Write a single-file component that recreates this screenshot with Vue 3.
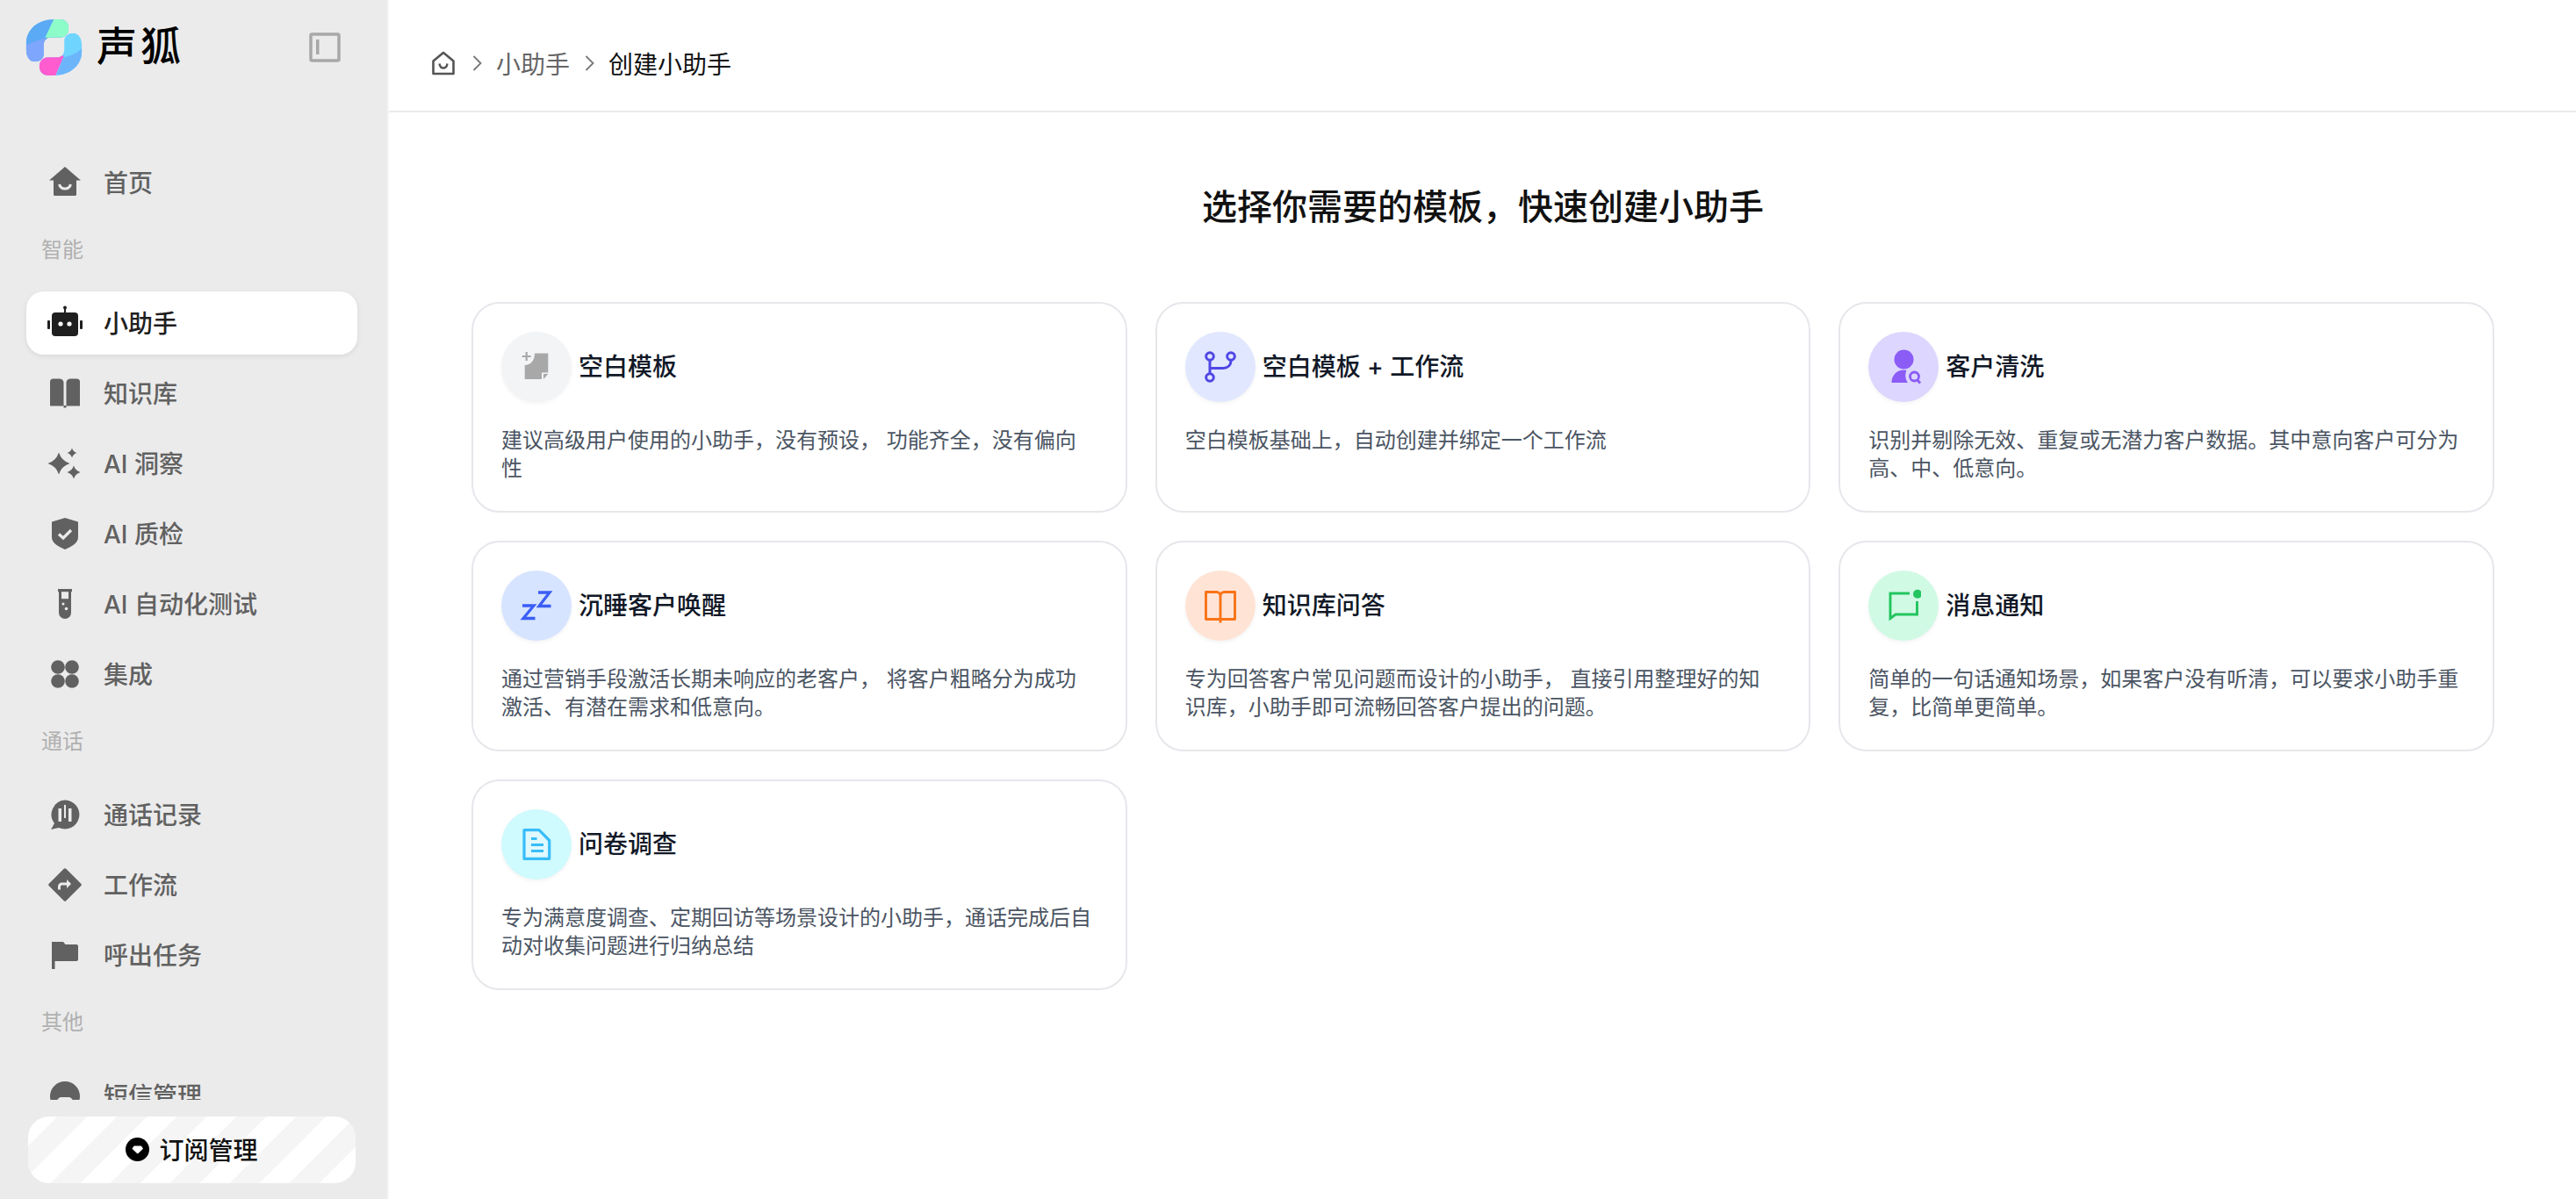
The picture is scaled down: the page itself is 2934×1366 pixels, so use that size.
<script setup>
const BG = '#ebebeb'

const sparkle = (x, y, r) => {
  const k = r * 0.24
  return `<path d="M${x} ${y - r}Q${x + k} ${y - k} ${x + r} ${y}Q${x + k} ${y + k} ${x} ${y + r}Q${x - k} ${y + k} ${x - r} ${y}Q${x - k} ${y - k} ${x} ${y - r}Z"/>`
}

const navIcons = {
  home: `<path d="M20 2 38 17.500H33V33.500a1.500 1.500 0 0 1-1.500 1.500H8.500a1.500 1.500 0 0 1-1.500-1.500V17.500H2Z"/><path d="M13.500 22c1 3.500 3.500 5 6.500 5s5.500-1.500 6.500-5" fill="none" stroke="${BG}" stroke-width="3"/>`,
  robot: `<rect x="19" y="1" width="2" height="8"/><circle cx="20" cy="2.500" r="2"/><rect x="5" y="8" width="30" height="27" rx="4"/><rect x="0" y="17" width="3" height="10" rx="1"/><rect x="37" y="17" width="3" height="10" rx="1"/><circle cx="15" cy="21" r="2.600" fill="#fff"/><circle cx="25" cy="21" r="2.600" fill="#fff"/>`,
  book: `<path d="M3 7a3.500 3.500 0 0 1 3.500-3.500h7c3 0 5 1.500 5 4.500v26.500H3Z"/><path d="M37 7a3.500 3.500 0 0 0-3.500-3.500h-7c-3 0-5 1.500-5 4.500v26.500H37Z"/><rect x="18.500" y="34" width="3" height="2.500"/>`,
  spark: sparkle(13, 20, 12.5) + sparkle(28, 8, 5.5) + sparkle(30, 30, 7.5),
  shield: `<path d="M20 2 35 6.500V24C35 31 27 35 20 38 13 35 5 31 5 24V6.500Z"/><path d="M13 20.500l5 4.500 9-9" fill="none" stroke="${BG}" stroke-width="3.200"/>`,
  tube: `<rect x="12" y="3" width="16" height="3.200"/><path d="M13 5H27V30a7 7 0 0 1-14 0Z"/><rect x="16" y="6.200" width="8" height="8" fill="${BG}"/><circle cx="18" cy="20" r="1.500" fill="${BG}"/><circle cx="21.500" cy="25.500" r="1.800" fill="${BG}"/>`,
  dots: `<circle cx="12" cy="12" r="7.800"/><circle cx="28" cy="12" r="7.800"/><circle cx="12" cy="28" r="7.800"/><circle cx="28" cy="28" r="7.800"/>`,
  call: `<path d="M20 3.500a16.500 16.500 0 1 1-7 31.500L4 37l4-7A16.500 16.500 0 0 1 20 3.500Z"/><rect x="12.500" y="13" width="3.500" height="15" fill="${BG}"/><rect x="24" y="13" width="3.500" height="15" fill="${BG}"/><rect x="19" y="9" width="2" height="15" fill="${BG}"/>`,
  flow: `<path d="M20 3 37 20 20 37 3 20Z" stroke="currentColor" stroke-width="3.500" stroke-linejoin="round"/><path d="M13.500 25.500V22a3 3 0 0 1 3-3h9" fill="none" stroke="${BG}" stroke-width="3"/><path d="M22 14l5 5-5 5Z" fill="${BG}"/>`,
  flag: `<path d="M5 5h13l2.500 3H33a2 2 0 0 1 2 2v15a2 2 0 0 1-2 2H8.500v9H5Z"/>`,
  sms: `<circle cx="20" cy="21" r="17"/><path d="M11 27a5 5 0 0 1 5-5h8a5 5 0 0 1 5 5v11H11Z" fill="${BG}"/>`
}

const navGroups = [
  { items: [{ label: '首页', icon: 'home' }] },
  {
    title: '智能',
    items: [
      { label: '小助手', icon: 'robot', active: true },
      { label: '知识库', icon: 'book' },
      { label: 'AI 洞察', icon: 'spark' },
      { label: 'AI 质检', icon: 'shield' },
      { label: 'AI 自动化测试', icon: 'tube' },
      { label: '集成', icon: 'dots' }
    ]
  },
  {
    title: '通话',
    items: [
      { label: '通话记录', icon: 'call' },
      { label: '工作流', icon: 'flow' },
      { label: '呼出任务', icon: 'flag' }
    ]
  },
  { title: '其他', items: [{ label: '短信管理', icon: 'sms' }] }
]

const templates = [
  {
    title: '空白模板',
    desc: '建议高级用户使用的小助手，没有预设， 功能齐全，没有偏向性',
    tone: 'grey',
    icon: `<path fill="currentColor" d="M18 4.500H33.300V26.500H26V34H6.700V18C13 18 18 13 18 4.500Z"/><path fill="currentColor" d="M28 28h5.300L28 34Z"/><path d="M8.700 3v10M3.700 8h10" stroke="currentColor" stroke-width="2.200"/>`
  },
  {
    title: '空白模板 + 工作流',
    desc: '空白模板基础上，自动创建并绑定一个工作流',
    tone: 'indigo',
    icon: `<g fill="none" stroke="currentColor" stroke-width="3"><circle cx="8" cy="8" r="4.300"/><circle cx="32" cy="8" r="4.300"/><circle cx="8" cy="32" r="4.300"/><path d="M8 12.500V27.500M32 12.500C32 18.500 28 21.500 23 21.500H8"/></g>`
  },
  {
    title: '客户清洗',
    desc: '识别并剔除无效、重复或无潜力客户数据。其中意向客户可分为高、中、低意向。',
    tone: 'violet',
    icon: `<circle cx="20.500" cy="11.500" r="11" fill="currentColor"/><path fill="currentColor" d="M6.500 38C6.500 30 12 23.500 20 23.500 21.500 23.500 22.500 23.700 23.500 24 21.500 28.500 22 34 25 38Z"/><circle cx="32.500" cy="31" r="5" fill="none" stroke="currentColor" stroke-width="2.800"/><path d="M36 35l3 3.500" stroke="currentColor" stroke-width="2.800"/>`
  },
  {
    title: '沉睡客户唤醒',
    desc: '通过营销手段激活长期未响应的老客户， 将客户粗略分为成功激活、有潜在需求和低意向。',
    tone: 'blue',
    icon: `<path fill="none" stroke="currentColor" stroke-width="3.300" d="M4 20H17L5 34.500H18.500M22 5H35L23 20.500H36.500"/>`
  },
  {
    title: '知识库问答',
    desc: '专为回答客户常见问题而设计的小助手， 直接引用整理好的知识库，小助手即可流畅回答客户提出的问题。',
    tone: 'orange',
    icon: `<path fill="none" stroke="currentColor" stroke-width="2.900" stroke-linejoin="round" d="M20 9C20 6.500 18 4.500 15.500 4.500H3.500V35.500H36.500V4.500H24.500C22 4.500 20 6.500 20 9V39.500"/>`
  },
  {
    title: '消息通知',
    desc: '简单的一句话通知场景，如果客户没有听清，可以要求小助手重复，比简单更简单。',
    tone: 'green',
    icon: `<path fill="none" stroke="currentColor" stroke-width="2.900" d="M27 6H5V34.500L11 30H35.500V15"/><circle cx="36" cy="6.700" r="5" fill="currentColor"/>`
  },
  {
    title: '问卷调查',
    desc: '专为满意度调查、定期回访等场景设计的小助手，通话完成后自动对收集问题进行归纳总结',
    tone: 'cyan',
    icon: `<path fill="#dff9ff" stroke="currentColor" stroke-width="3.200" stroke-linejoin="round" d="M6 3.700H23L34.700 15.500V36.300H6Z"/><path fill="none" stroke="currentColor" stroke-width="3" d="M14 13.500H20.500M14 20.500H28M14 27.500H28"/>`
  }
]
</script>

<template>
  <div class="layout">
    <aside class="sidebar">
      <div class="brand">
        <svg class="logo" viewBox="85 60 200 200" aria-hidden="true">
          <defs>
            <clipPath id="blobA">
              <path d="M185 66H205C225 66 235 80 235 97 235 115 222 128 205 128H175C160 128 150 138 150 155V185C150 200 135 210 120 210 100 210 90 190 90 165V150C90 100 130 66 185 66Z" />
            </clipPath>
            <clipPath id="blobB">
              <path d="M185 257H165C145 257 135 243 135 226 135 208 148 195 165 195H195C210 195 220 185 220 168V138C220 123 235 113 250 113 270 113 280 133 280 158V173C280 223 240 257 185 257Z" />
            </clipPath>
          </defs>
          <g clip-path="url(#blobA)">
            <rect x="85" y="60" width="160" height="160" fill="#5aaaf5" />
            <path d="M85 155 155 128 150 220H85Z" fill="#7ea6fc" />
            <path d="M187 60 155 128H245V60Z" fill="#8dfcc8" />
          </g>
          <g clip-path="url(#blobB)">
            <rect x="130" y="105" width="160" height="160" fill="#6fd5ff" />
            <path d="M218 195C245 190 265 180 285 160V265H190Z" fill="#6cb5fb" />
            <path d="M130 190H219L187 265H130Z" fill="#ff5cd0" />
          </g>
        </svg>
        <span class="brand-name">声狐</span>
        <svg class="toggle" viewBox="0 0 36 34" aria-hidden="true">
          <rect x="2" y="2" width="32" height="30" rx="1.500" fill="none" stroke="#a8a8a8" stroke-width="3.500" />
          <rect x="8" y="8" width="3.500" height="17" fill="#a8a8a8" />
        </svg>
      </div>

      <nav class="nav">
        <template v-for="(group, i) in navGroups" :key="i">
          <div v-if="group.title" class="nav-title">{{ group.title }}</div>
          <a
            v-for="item in group.items"
            :key="item.label"
            class="nav-item"
            :class="{ active: item.active }"
          >
            <svg class="nav-icon" viewBox="0 0 40 40" fill="currentColor" v-html="navIcons[item.icon]"></svg>
            <span class="nav-label">{{ item.label }}</span>
          </a>
        </template>
      </nav>

      <button class="subscribe">
        <svg class="gem" viewBox="0 0 27 27" aria-hidden="true">
          <circle cx="13.500" cy="13.500" r="13.500" fill="#000" />
          <path d="M10 9.500H17.500A1 1 0 0 1 18.300 10L20 12.800 14.200 18.200A1 1 0 0 1 13.300 18.200L7.500 12.800 9.200 10A1 1 0 0 1 10 9.500Z" fill="#fff" />
        </svg>
        订阅管理
      </button>
    </aside>

    <main class="main">
      <header class="topbar">
        <svg class="crumb-home" viewBox="0 0 32 32" aria-hidden="true">
          <path d="M16 4 27.500 13.500V28H4.500V13.500Z" fill="none" stroke="#555" stroke-width="2.600" stroke-linejoin="round" />
          <path d="M11.500 16.500C12 20 14 21.500 16 21.500S20 20 20.500 16.500" fill="none" stroke="#555" stroke-width="2.400" />
        </svg>
        <svg class="crumb-sep" viewBox="0 0 24 24" aria-hidden="true">
          <path d="M8.500 4 16.500 12 8.500 20" fill="none" stroke="#777" stroke-width="1.800" />
        </svg>
        <span class="crumb">小助手</span>
        <svg class="crumb-sep" viewBox="0 0 24 24" aria-hidden="true">
          <path d="M8.500 4 16.500 12 8.500 20" fill="none" stroke="#777" stroke-width="1.800" />
        </svg>
        <span class="crumb current">创建小助手</span>
      </header>

      <section class="content">
        <h1 class="heading">选择你需要的模板，快速创建小助手</h1>
        <div class="grid">
          <article v-for="t in templates" :key="t.title" class="card">
            <div class="card-head">
              <span class="badge" :class="t.tone">
                <svg viewBox="0 0 40 40" v-html="t.icon"></svg>
              </span>
              <h3 class="card-title">{{ t.title }}</h3>
            </div>
            <p class="card-desc">{{ t.desc }}</p>
          </article>
        </div>
      </section>
    </main>
  </div>
</template>

<style>
html,
body {
  margin: 0;
  background: #fff;
}
</style>

<style scoped>
.layout {
  display: flex;
  height: 1366px;
  overflow: hidden;
  font-family: Inter, "Noto Sans CJK SC", sans-serif;
  background: #fff;
}

.sidebar {
  width: 441px;
  flex-shrink: 0;
  display: flex;
  flex-direction: column;
  background: #ebebeb;
}

.brand {
  height: 108px;
  flex-shrink: 0;
  display: flex;
  align-items: center;
  padding-left: 28px;
}

.logo {
  width: 67px;
  height: 67px;
  margin-bottom: 2px;
}

.brand-name {
  margin: 0 0 4px 15px;
  font-size: 46px;
  line-height: 1;
  font-weight: 500;
  letter-spacing: 4px;
  color: #000;
}

.toggle {
  width: 36px;
  height: 34px;
  margin-left: auto;
  margin-right: 53px;
}

.nav {
  flex: 1;
  min-height: 0;
  overflow: hidden;
  margin-top: 64px;
  padding: 0 34px 0 30px;
  display: flex;
  flex-direction: column;
  gap: 8px;
}

.nav-title {
  flex-shrink: 0;
  padding: 17px 0 23px 17px;
  font-size: 24px;
  line-height: 32px;
  color: #b0b0b0;
}

.nav-item {
  flex-shrink: 0;
  height: 72px;
  display: flex;
  align-items: center;
  gap: 24px;
  padding-left: 24px;
  border-radius: 20px;
  font-size: 28px;
  font-weight: 500;
  color: #616161;
}

.nav-label {
  margin-bottom: 2px;
}

.nav-item.active {
  background: #fff;
  color: #1f1f1f;
  box-shadow: 0 2px 6px rgba(0, 0, 0, 0.08);
}

.nav-icon {
  width: 40px;
  height: 40px;
  flex-shrink: 0;
}

.subscribe {
  flex-shrink: 0;
  height: 76px;
  margin: 19px 36px 18px 32px;
  padding: 0 0 2px;
  display: flex;
  align-items: center;
  justify-content: center;
  gap: 11px;
  border: none;
  border-radius: 24px;
  background: repeating-linear-gradient(135deg, #fff 0 24px, #f5f5f5 24px 48px);
  font-family: inherit;
  font-size: 28px;
  font-weight: 500;
  color: #111;
}

.gem {
  width: 27px;
  height: 27px;
}

.main {
  flex: 1;
  min-width: 0;
  border-left: 2px solid #f5f5f5;
  display: flex;
  flex-direction: column;
}

.topbar {
  height: 128px;
  flex-shrink: 0;
  display: flex;
  align-items: center;
  gap: 10px;
  padding: 18px 46px 0;
  box-sizing: border-box;
  border-bottom: 2px solid #ebebeb;
}

.crumb-home {
  width: 32px;
  height: 32px;
}

.crumb-sep {
  width: 24px;
  height: 24px;
}

.crumb {
  font-size: 28px;
  color: #666;
}

.crumb.current {
  color: #111;
}

.content {
  padding: 80px 0 0 1px;
}

.heading {
  margin: 0 0 80px;
  text-align: center;
  font-size: 40px;
  line-height: 56px;
  font-weight: 500;
  color: #111;
}

.grid {
  width: 2304px;
  margin: 0 auto;
  display: grid;
  grid-template-columns: repeat(3, 1fr);
  gap: 32px;
}

.card {
  box-sizing: border-box;
  height: 240px;
  padding: 32px;
  border: 2px solid #e5e7eb;
  border-radius: 32px;
  background: #fff;
}

.card-head {
  display: flex;
  align-items: center;
  gap: 8px;
}

.badge {
  width: 80px;
  height: 80px;
  flex-shrink: 0;
  display: flex;
  align-items: center;
  justify-content: center;
  border-radius: 50%;
  box-shadow: 0 2px 4px rgba(0, 0, 0, 0.05);
}

.badge svg {
  width: 40px;
  height: 40px;
}

.grey {
  background: #f3f4f6;
  color: #a8a8a8;
}

.indigo {
  background: #e0e7ff;
  color: #4f46e5;
}

.violet {
  background: #ddd6fe;
  color: #8b5cf6;
}

.blue {
  background: #d6e4ff;
  color: #3b5ef6;
}

.orange {
  background: #ffe4d6;
  color: #f97316;
}

.green {
  background: #d1fae5;
  color: #22c55e;
}

.cyan {
  background: #cffafe;
  color: #38bdf8;
}

.card-title {
  margin: 0;
  font-size: 28px;
  line-height: 40px;
  font-weight: 500;
  color: #111827;
}

.card-desc {
  margin: 28px 0 0;
  font-size: 24px;
  line-height: 32px;
  color: #4b5563;
}
</style>
